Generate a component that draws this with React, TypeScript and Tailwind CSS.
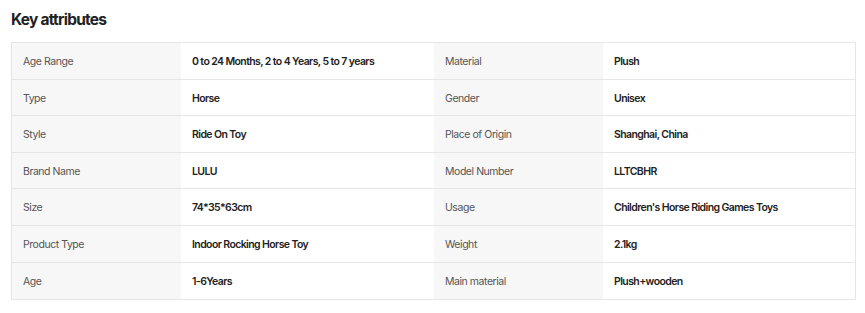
import React from "react";

const rows: [string, string, string, string][] = [
  ["Age Range", "0 to 24 Months, 2 to 4 Years, 5 to 7 years", "Material", "Plush"],
  ["Type", "Horse", "Gender", "Unisex"],
  ["Style", "Ride On Toy", "Place of Origin", "Shanghai, China"],
  ["Brand Name", "LULU", "Model Number", "LLTCBHR"],
  ["Size", "74*35*63cm", "Usage", "Children's Horse Riding Games Toys"],
  ["Product Type", "Indoor Rocking Horse Toy", "Weight", "2.1kg"],
  ["Age", "1-6Years", "Main material", "Plush+wooden"],
];

export default function App() {
  return (
    <div className="w-[865px] h-[313px] bg-white px-[11px] pt-[10px]" style={{ fontFamily: "Inter, 'Noto Sans', sans-serif" }}>
      <h2 className="text-[15.5px] font-bold text-[#222] leading-[20px] tracking-[-0.75px]">Key attributes</h2>
      <div className="mt-[12px] w-[845px] border border-[#e6e6e6]">
        {rows.map((r, i) => (
          <div key={i} className={`grid grid-cols-[169px_253px_169px_1fr] h-[36.6px] ${i < rows.length - 1 ? "border-b border-[#e6e6e6]" : ""}`}>
            <div className="bg-[#f7f7f7] flex items-center pl-[11px] pt-[2px] text-[10.5px] tracking-[-0.45px] text-[#555]">{r[0]}</div>
            <div className="bg-white flex items-center pl-[11px] pt-[2px] text-[10.5px] tracking-[-0.6px] font-semibold text-[#222]">{r[1]}</div>
            <div className="bg-[#f7f7f7] flex items-center pl-[11px] pt-[2px] text-[10.5px] tracking-[-0.45px] text-[#555]">{r[2]}</div>
            <div className="bg-white flex items-center pl-[11px] pt-[2px] text-[10.5px] tracking-[-0.6px] font-semibold text-[#222]">{r[3]}</div>
          </div>
        ))}
      </div>
    </div>
  );
}
